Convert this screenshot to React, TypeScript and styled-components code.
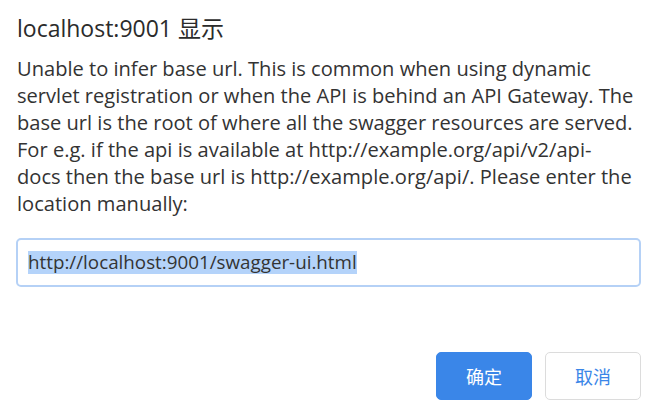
import React from "react";
import styled, { createGlobalStyle } from "styled-components";

const Global = createGlobalStyle`
  html, body { margin: 0; padding: 0; background: #ffffff; }
  body { font-family: "Open Sans", "Noto Sans CJK SC", sans-serif; }
`;

const Dialog = styled.div`
  width: 648px;
  height: 420px;
  box-sizing: border-box;
  padding: 13px 7px 20px 16px;
  display: flex;
  flex-direction: column;
  background: #ffffff;
  color: #333333;
`;

const Title = styled.h1`
  margin: 0;
  font-size: 23px;
  font-weight: 400;
  line-height: 30px;
  padding-left: 1px;
  color: #2b2b2b;
`;

const Message = styled.p`
  margin: 12px 0 0 0;
  padding-left: 1px;
  font-size: 20.1px;
  line-height: 27px;
  color: #333333;
  white-space: nowrap;
`;

const InputBox = styled.div`
  margin-top: 21px;
  width: 625px;
  height: 49px;
  box-sizing: border-box;
  border: 2px solid #b5d1f6;
  border-radius: 5px;
  display: flex;
  align-items: center;
  padding-left: 10px;
  font-size: 18.8px;
  color: #333333;
`;

const Selected = styled.span`
  display: inline-block;
  background: #b4d3fa;
  height: 23px;
  line-height: 23px;
`;

const Actions = styled.div`
  margin-top: auto;
  display: flex;
  justify-content: flex-end;
  gap: 13px;
`;

const Button = styled.button<{ $primary?: boolean }>`
  width: 96px;
  height: 48px;
  box-sizing: border-box;
  border-radius: 5px;
  font-family: "Noto Sans CJK SC", sans-serif;
  font-size: 18px;
  cursor: pointer;
  border: 1px solid ${(p) => (p.$primary ? "#3a86e8" : "#dcdcdc")};
  background: ${(p) => (p.$primary ? "#3a86e8" : "#ffffff")};
  color: ${(p) => (p.$primary ? "#ffffff" : "#3a86e8")};
`;

const lines = [
  "Unable to infer base url. This is common when using dynamic",
  "servlet registration or when the API is behind an API Gateway. The",
  "base url is the root of where all the swagger resources are served.",
  "For e.g. if the api is available at http://example.org/api/v2/api-",
  "docs then the base url is http://example.org/api/. Please enter the",
  "location manually:",
];

export default function App() {
  return (
    <>
      <Global />
      <Dialog>
        <Title>localhost:9001 显示</Title>
        <Message>
          {lines.map((l, i) => (
            <React.Fragment key={i}>
              {l}
              {i < lines.length - 1 && <br />}
            </React.Fragment>
          ))}
        </Message>
        <InputBox>
          <Selected>http://localhost:9001/swagger-ui.html</Selected>
        </InputBox>
        <Actions>
          <Button $primary>确定</Button>
          <Button>取消</Button>
        </Actions>
      </Dialog>
    </>
  );
}
